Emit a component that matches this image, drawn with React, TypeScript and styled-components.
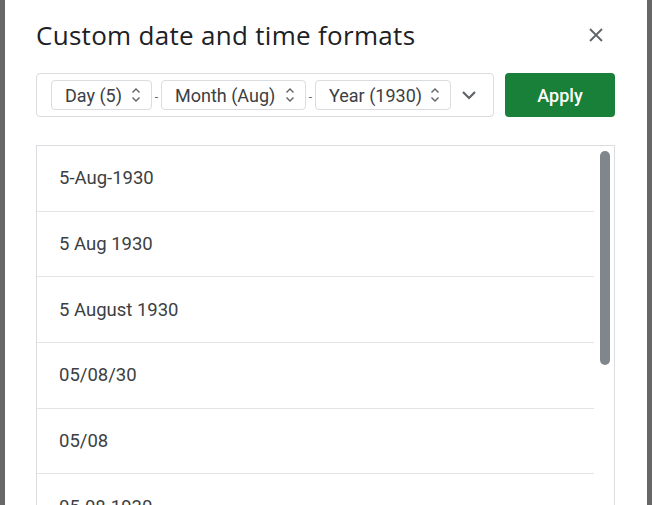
import React from "react";
import styled, { createGlobalStyle } from "styled-components";

const GlobalStyle = createGlobalStyle`
  html, body {
    margin: 0;
    padding: 0;
    height: 100%;
    overflow: hidden;
    background: #676767;
  }
  #root {
    height: 100%;
  }
`;

const Backdrop = styled.div`
  height: 505px;
  display: flex;
  padding: 0 5px;
  box-sizing: border-box;
`;

const Dialog = styled.div`
  flex: 1;
  background: #ffffff;
  padding: 17px 32px 0 31px;
  display: flex;
  flex-direction: column;
  overflow: hidden;
`;

const Header = styled.div`
  display: flex;
  align-items: center;
  justify-content: space-between;
  height: 36px;
`;

const Title = styled.h1`
  margin: 0;
  font-family: "Open Sans", "Liberation Sans", sans-serif;
  font-weight: 400;
  font-size: 26px;
  line-height: 36px;
  color: #202124;
  letter-spacing: 0.3px;
`;

const CloseButton = styled.button`
  width: 24px;
  height: 24px;
  margin-right: 7px;
  border: none;
  background: none;
  padding: 0;
  display: flex;
  align-items: center;
  justify-content: center;
  cursor: pointer;
`;

const Toolbar = styled.div`
  display: flex;
  gap: 11px;
  margin-top: 20px;
`;

const FormatBox = styled.div`
  flex: 1;
  height: 44px;
  box-sizing: border-box;
  border: 1px solid #dadce0;
  border-radius: 4px;
  display: flex;
  align-items: center;
  padding: 0 14px;
`;

const Chip = styled.div<{ $width: number }>`
  width: ${(p) => p.$width}px;
  height: 30px;
  box-sizing: border-box;
  border: 1px solid #dadce0;
  border-radius: 4px;
  display: flex;
  align-items: center;
  justify-content: space-between;
  padding: 0 10px 0 13px;
  font-family: Roboto, "Liberation Sans", sans-serif;
  font-size: 18px;
  color: #3c4043;
`;

const Separator = styled.span`
  width: 9px;
  text-align: center;
  font-family: Roboto, "Liberation Sans", sans-serif;
  font-size: 12px;
  color: #5f6368;
  padding-top: 3px;
`;

const MoreButton = styled.div`
  margin-left: 10px;
  display: flex;
  align-items: center;
`;

const ApplyButton = styled.button`
  width: 110px;
  height: 44px;
  border: none;
  border-radius: 4px;
  background: #188038;
  color: #ffffff;
  font-family: Roboto, "Liberation Sans", sans-serif;
  font-weight: 500;
  font-size: 18px;
  cursor: pointer;
`;

const ListFrame = styled.div`
  position: relative;
  margin-top: 28px;
  flex: 1;
  border: 1px solid #dadce0;
  border-bottom: none;
  overflow: hidden;
`;

const List = styled.ul`
  list-style: none;
  margin: 0 20px 0 0;
  padding: 0;
`;

const Row = styled.li`
  height: 64.7px;
  display: flex;
  align-items: center;
  padding-left: 22px;
  border-bottom: 1px solid #e3e4e6;
  font-family: Roboto, "Liberation Sans", sans-serif;
  font-size: 18.5px;
  color: #3c4043;
`;

const ScrollThumb = styled.div`
  position: absolute;
  top: 5px;
  right: 4px;
  width: 10px;
  height: 214px;
  border-radius: 5px;
  background: #80868b;
`;

const Spinner = () => (
  <svg width="10" height="16" viewBox="0 0 10 16" fill="none">
    <path d="M1.5 5.5 L5 2 L8.5 5.5" stroke="#5f6368" strokeWidth="1.4" />
    <path d="M1.5 10.5 L5 14 L8.5 10.5" stroke="#5f6368" strokeWidth="1.4" />
  </svg>
);

const parts = [
  { label: "Day (5)", width: 101 },
  { label: "Month (Aug)", width: 145 },
  { label: "Year (1930)", width: 136 },
];

const formats = [
  "5-Aug-1930",
  "5 Aug 1930",
  "5 August 1930",
  "05/08/30",
  "05/08",
  "05-08-1930",
  "1930-08-05",
];

export default function App() {
  return (
    <>
      <GlobalStyle />
      <Backdrop>
        <Dialog>
          <Header>
            <Title>Custom date and time formats</Title>
            <CloseButton aria-label="Close">
              <svg width="14" height="14" viewBox="0 0 14 14">
                <path
                  d="M1 1 L13 13 M13 1 L1 13"
                  stroke="#5f6368"
                  strokeWidth="1.8"
                />
              </svg>
            </CloseButton>
          </Header>

          <Toolbar>
            <FormatBox>
              {parts.map((part, i) => (
                <React.Fragment key={part.label}>
                  {i > 0 && <Separator>-</Separator>}
                  <Chip $width={part.width}>
                    <span>{part.label}</span>
                    <Spinner />
                  </Chip>
                </React.Fragment>
              ))}
              <MoreButton>
                <svg width="16" height="10" viewBox="0 0 16 10" fill="none">
                  <path
                    d="M2 2 L8 8 L14 2"
                    stroke="#5f6368"
                    strokeWidth="2.2"
                  />
                </svg>
              </MoreButton>
            </FormatBox>
            <ApplyButton>Apply</ApplyButton>
          </Toolbar>

          <ListFrame>
            <List>
              {formats.map((f) => (
                <Row key={f}>{f}</Row>
              ))}
            </List>
            <ScrollThumb />
          </ListFrame>
        </Dialog>
      </Backdrop>
    </>
  );
}
